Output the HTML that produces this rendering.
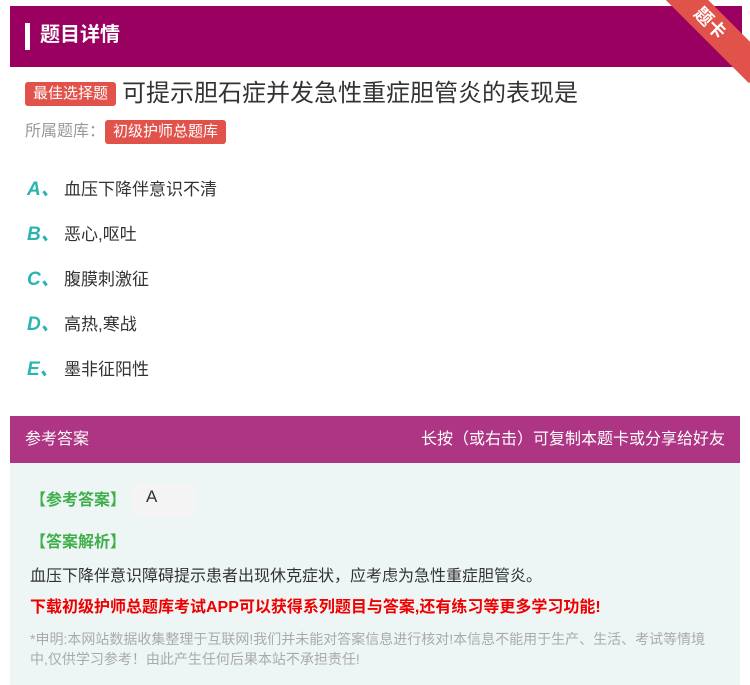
<!DOCTYPE html>
<html><head><meta charset="utf-8"><style>
body{margin:0;width:750px;height:685px;background:#fff;font-family:"Liberation Sans","Noto Sans CJK SC",sans-serif;position:relative;overflow:hidden}
.hdr{position:absolute;left:10px;top:6px;width:732px;height:61px;background:#9a0060}
.hdr .bar{position:absolute;left:15px;top:17px;width:5px;height:27px;background:#fff}
.hdr .t{position:absolute;left:30px;top:14px;color:#fff;font-size:20px;font-weight:bold;line-height:30px}
.rib{position:absolute;right:-30px;top:8px;width:140px;height:30px;background:#e0524a;color:#fff;transform:rotate(45deg);text-align:center;font-size:18px;line-height:30px;font-weight:bold}
.tag{display:inline-block;background:#e0524a;color:#fff;border-radius:3px;font-size:15px;padding:0 8px;line-height:24px}
.q{position:absolute;left:25px;top:78px;font-size:24px;color:#333;line-height:32px}
.q .tag{vertical-align:3px;margin-right:6px}
.lib{position:absolute;left:25px;top:120px;font-size:16px;color:#999;line-height:24px}
.opt{position:absolute;left:27px;font-size:17px;color:#333}
.opt b{color:#2ab5b0;font-style:italic;font-size:19px;display:inline-block;width:37px}
.ah{position:absolute;left:10px;top:416px;width:730px;height:47px;background:#ad3583;color:#fff;font-size:16px;line-height:47px}
.ab{position:absolute;left:10px;top:463px;width:730px;height:222px;background:#eef6f5}
.g{color:#3fae4b;font-weight:bold;font-size:16px;position:absolute}
</style></head><body>
<div class="hdr"><div class="bar"></div><div class="t">题目详情</div></div>
<div class="rib">题卡</div>
<div class="q"><span class="tag">最佳选择题</span>可提示胆石症并发急性重症胆管炎的表现是</div>
<div class="lib">所属题库：<span class="tag">初级护师总题库</span></div>
<div class="opt" style="top:174px"><b>A、</b>血压下降伴意识不清</div>
<div class="opt" style="top:219px"><b>B、</b>恶心,呕吐</div>
<div class="opt" style="top:264px"><b>C、</b>腹膜刺激征</div>
<div class="opt" style="top:309px"><b>D、</b>高热,寒战</div>
<div class="opt" style="top:354px"><b>E、</b>墨非征阳性</div>
<div class="ah"><span style="margin-left:15px">参考答案</span><span style="position:absolute;right:15px">长按（或右击）可复制本题卡或分享给好友</span></div>
<div class="ab">
<div class="g" style="left:20px;top:23px">【参考答案】</div>
<div style="position:absolute;left:122px;top:21px;width:63px;height:32px;background:#f4f4f4;font-size:17px;color:#333;padding-left:14px;box-sizing:border-box;line-height:26px">A</div>
<div class="g" style="left:20px;top:65px">【答案解析】</div>
<div style="position:absolute;left:20px;top:99px;font-size:16px;color:#333">血压下降伴意识障碍提示患者出现休克症状，应考虑为急性重症胆管炎。</div>
<div style="position:absolute;left:20px;top:130px;font-size:16px;color:#e00;font-weight:bold">下载初级护师总题库考试APP可以获得系列题目与答案,还有练习等更多学习功能!</div>
<div style="position:absolute;left:20px;top:166px;width:690px;font-size:14px;color:#aaa;line-height:20px">*申明:本网站数据收集整理于互联网!我们并未能对答案信息进行核对!本信息不能用于生产、生活、考试等情境中,仅供学习参考！由此产生任何后果本站不承担责任!</div>
</div>
</body></html>
